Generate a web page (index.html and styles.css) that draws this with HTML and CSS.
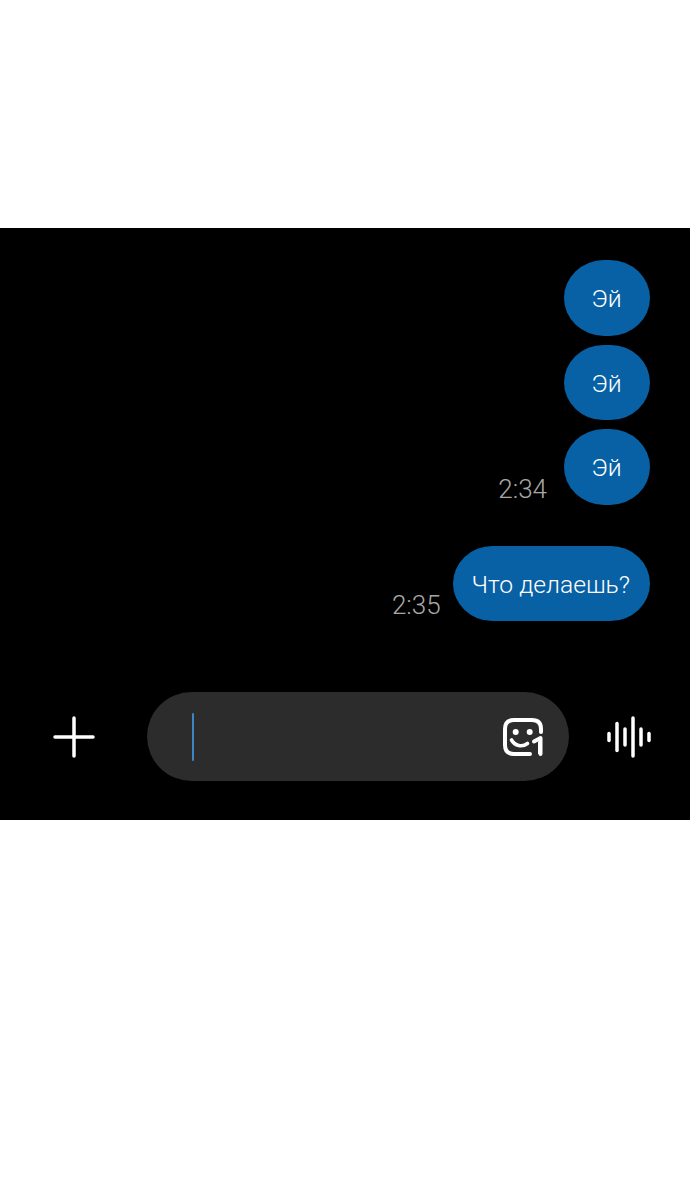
FILE: index.html
```html
<!DOCTYPE html>
<html lang="ru">
<head>
    <meta charset="UTF-8">
    <meta name="viewport" content="width=device-width, initial-scale=1.0">
    <title>Чат</title>
    <link rel="stylesheet" href="styles.css">
</head>
<body>

    <div id="chat-screen">
        <div id="messages">
            <div class="message-row">
                <div class="bubble">Эй</div>
            </div>
            <div class="message-row">
                <div class="bubble">Эй</div>
            </div>
            <div class="message-row">
                <span class="time">2:34</span>
                <div class="bubble">Эй</div>
            </div>
            <div class="message-row new-group">
                <span class="time">2:35</span>
                <div class="bubble">Что делаешь?</div>
            </div>
        </div>

        <div id="composer">
            <svg class="plus-icon" width="42" height="42" viewBox="0 0 42 42" fill="none" stroke="#fff" stroke-width="3.500" stroke-linecap="round">
                <path d="M21 2V40"/>
                <path d="M2 21H40"/>
            </svg>
            <div id="input-box">
                <div class="caret"></div>
                <svg class="sticker-icon" width="40" height="38" viewBox="0 0 40 38" fill="none" stroke="#fff" stroke-width="4" stroke-linecap="round" stroke-linejoin="round">
                    <path d="M27 36H11C5 36 2 33 2 27V11C2 5 5 2 11 2H29C35 2 38 5 38 11V14"/>
                    <path d="M8.500 22C12 28 19 29.500 24.500 25.500" stroke-width="3.600"/>
                    <path d="M31 23.500L37.500 20V36"/>
                    <path d="M36.500 24V36" stroke-width="3" stroke-linecap="butt"/>
                    <circle cx="12.700" cy="14" r="3" fill="#fff" stroke="none"/>
                    <circle cx="26.700" cy="14" r="3" fill="#fff" stroke="none"/>
                </svg>
            </div>
            <svg class="voice-icon" width="44" height="42" viewBox="0 0 44 42" fill="none" stroke="#fff" stroke-width="3.500" stroke-linecap="round">
                <path d="M2 17.500V24.500"/>
                <path d="M10 7.500V34.500"/>
                <path d="M18 13V29"/>
                <path d="M26 2V40"/>
                <path d="M34 13V29"/>
                <path d="M42 17.500V24.500"/>
            </svg>
        </div>
    </div>

</body>
</html>
```

FILE: styles.css
```css
body {
    margin: 0;
    padding: 228px 0 378px;
    background-color: #fff;
    font-family: Roboto, "Liberation Sans", sans-serif;
    font-weight: 300;
}

#chat-screen {
    height: 592px;
    background-color: #000;
    display: flex;
    flex-direction: column;
    justify-content: space-between;
}

#messages {
    display: flex;
    flex-direction: column;
    gap: 9.100px;
    padding: 32px 40px 0 0;
}

.message-row {
    display: flex;
    justify-content: flex-end;
    align-items: flex-end;
    gap: 17px;
}

.new-group {
    margin-top: 32.200px;
    gap: 12px;
}

.bubble {
    height: 75.500px;
    padding: 0 20px 0 19px;
    min-width: 47px;
    border-radius: 40px / 38px;
    background-color: #0861a4;
    color: #fff;
    font-size: 24.700px;
    line-height: 78px;
    text-align: center;
}

.time {
    color: #a8a8a8;
    font-size: 26px;
    line-height: 32px;
}

#composer {
    display: flex;
    align-items: center;
    gap: 38px;
    padding: 0 39.500px 39px 53px;
}

#composer svg {
    flex-shrink: 0;
}

.plus-icon {
    margin-right: 14px;
}

#input-box {
    width: 422px;
    height: 89px;
    flex-shrink: 0;
    box-sizing: border-box;
    padding: 0 26px 0 45px;
    border-radius: 45px;
    background-color: #2c2c2c;
    display: flex;
    align-items: center;
    justify-content: space-between;
}

.caret {
    width: 2px;
    height: 48px;
    border-radius: 1px;
    background-color: #3d86c6;
}
```
